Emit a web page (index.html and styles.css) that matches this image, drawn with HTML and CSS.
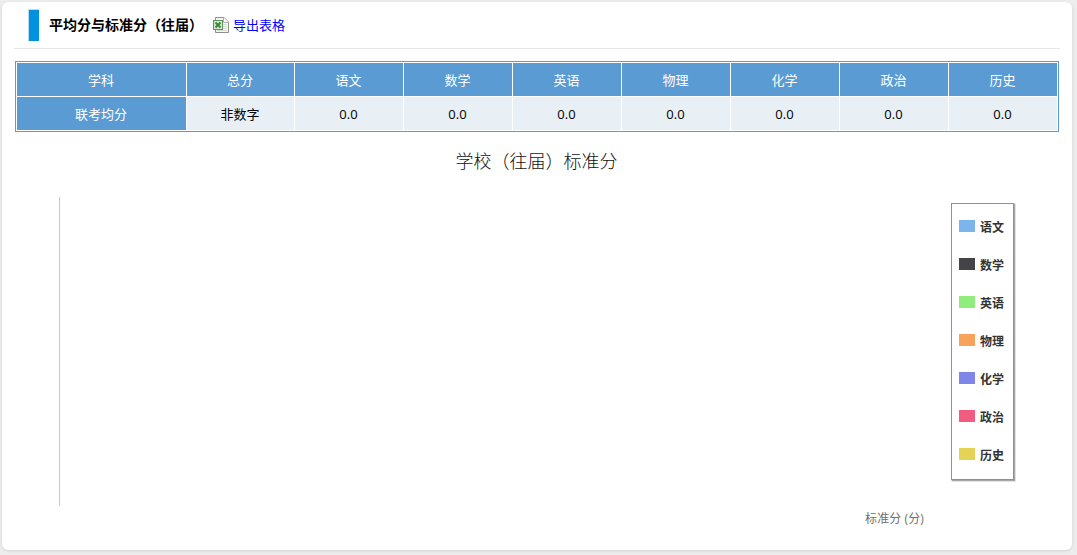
FILE: index.html
```html
<!DOCTYPE html>
<html lang="zh-CN">
<head>
<meta charset="utf-8">
<title>平均分与标准分（往届）</title>
<link rel="stylesheet" href="styles.css">
</head>
<body>
<main class="panel">
  <header class="head">
    <span class="bar"></span>
    <h1>平均分与标准分（往届）</h1>
    <a class="export" href="#">
      <svg width="18" height="18" viewBox="0 0 18 18">
        <path d="M3.500 1.500h8.500l4.500 4.500v10.500h-13z" fill="#f6f6f6" stroke="#8e8e8e"/>
        <path d="M11.500 1.500v5h5" fill="#fff" stroke="#b0b0b0"/>
        <path d="M11 8.500h4M11 10.500h4M11 12.500h4M5 14.500h10" stroke="#d5ddd3"/>
        <rect x="1.500" y="4.500" width="9" height="9" fill="#d5e7d0" stroke="#5d9558"/>
        <path d="M3.500 6.500l5 5M8.500 6.500l-5 5" stroke="#3c853b" stroke-width="2"/>
      </svg>
      <span>导出表格</span>
    </a>
  </header>
  <table class="scores">
    <colgroup><col class="c-name"><col class="c-total"><col span="7"></colgroup>
    <tr class="subjects"><th>学科</th><th>总分</th><th>语文</th><th>数学</th><th>英语</th><th>物理</th><th>化学</th><th>政治</th><th>历史</th></tr>
    <tr><th>联考均分</th><td>非数字</td><td>0.0</td><td>0.0</td><td>0.0</td><td>0.0</td><td>0.0</td><td>0.0</td><td>0.0</td></tr>
  </table>
  <section class="chart">
    <h2>学校（往届）标准分</h2>
    <div class="chart-body">
      <div class="plot"></div>
      <ul class="legend">
        <li><i class="blue"></i>语文</li>
        <li><i class="dark"></i>数学</li>
        <li><i class="green"></i>英语</li>
        <li><i class="orange"></i>物理</li>
        <li><i class="violet"></i>化学</li>
        <li><i class="pink"></i>政治</li>
        <li><i class="yellow"></i>历史</li>
      </ul>
    </div>
    <p class="axis">标准分 (分)</p>
  </section>
</main>
</body>
</html>
```
FILE: styles.css
```css
* { box-sizing: border-box; }
body {
  margin: 0;
  height: 555px;
  overflow: hidden;
  padding: 2px 5px 5px 2px;
  background: #ededed;
  font: 13px "Open Sans", "Noto Sans CJK SC", sans-serif;
}
.panel {
  height: 548px;
  padding: 0 12px;
  background: #fff;
  border-radius: 6px;
  box-shadow: 0 1px 3px rgba(0, 0, 0, .12);
}
.head {
  height: 47px;
  display: flex;
  align-items: center;
  border-bottom: 1px solid #e6e6e6;
}
.bar {
  width: 11px;
  height: 32px;
  margin: 0 10px 0 14px;
  background: #0092e0;
  border: 1px solid #b5dcf4;
  border-width: 1px 0 0 1px;
}
h1 {
  margin: 0;
  padding-bottom: 2px;
  width: 163px;
  font: bold 14px/20px "Noto Sans CJK SC", sans-serif;
  color: #000;
  white-space: nowrap;
}
.export {
  display: flex;
  align-items: center;
  gap: 3px;
  color: #00f;
  text-decoration: none;
  line-height: 20px;
}
.scores {
  table-layout: fixed;
  width: 1044px;
  margin: 12px 0 0 1px;
  border: 1px solid #5a9bd3;
  border-collapse: separate;
  border-spacing: 1px;
  text-align: center;
}
.c-name { width: 169px; }
.c-total { width: 107px; }
.scores th,
.scores td { height: 33px; padding: 0 1px 0 0; line-height: 20px; }
.scores th { background: #5a9bd3; color: #fff; font-weight: 400; }
.scores td { background: #e8eff5; color: #000; }
.chart { padding: 14px 46px 0 45px; }
h2 {
  margin: 0;
  font: 300 18px/28px "Noto Sans CJK SC", sans-serif;
  color: #111;
  text-align: center;
}
.chart-body {
  display: flex;
  justify-content: space-between;
  padding-top: 23px;
  height: 332px;
}
.plot { width: 870px; height: 309px; border-left: 1px solid #c0c8d2; }
.legend {
  width: 63px;
  height: 277px;
  margin: 6px 0 0;
  padding: 3px 0 3px 7px;
  list-style: none;
  border: 1px solid #909090;
  box-shadow: 1px 1px 1px rgba(0, 0, 0, .3), 1px 1px 0 1px rgba(0, 0, 0, .06);
  background: #fff;
}
.legend li {
  display: flex;
  align-items: center;
  height: 38px;
  gap: 5px;
  color: #333;
  font: bold 12px "Noto Sans CJK SC", sans-serif;
  white-space: nowrap;
}
.legend i { flex: none; width: 16px; height: 12px; }
.blue { background: #7cb5ec; }
.dark { background: #434348; }
.green { background: #90ed7d; }
.orange { background: #f7a35c; }
.violet { background: #8085e9; }
.pink { background: #f15c80; }
.yellow { background: #e4d354; }
.axis {
  margin: 3px 90px 0 0;
  font-size: 12px;
  line-height: 20px;
  letter-spacing: .1px;
  color: #707070;
  text-align: right;
}
```
